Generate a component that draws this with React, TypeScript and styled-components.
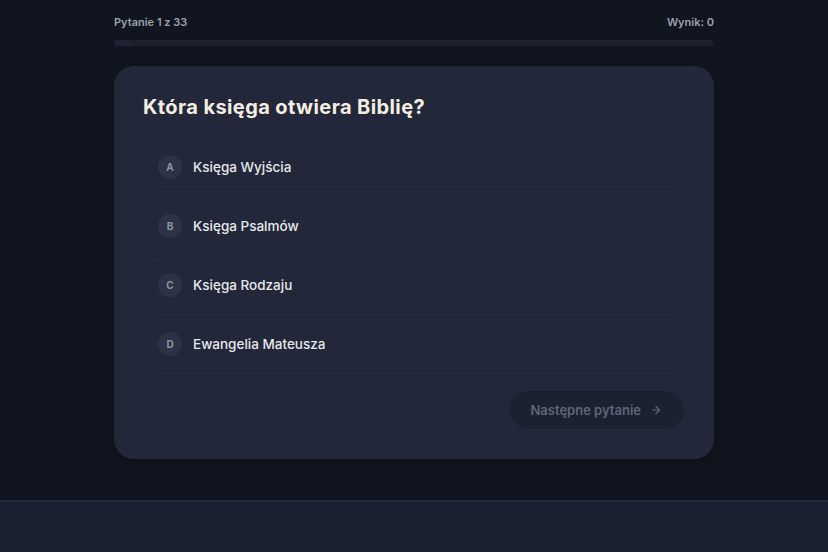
import React from 'react';
import styled, { createGlobalStyle } from 'styled-components';

const GlobalStyle = createGlobalStyle`
  html, body {
    margin: 0;
    padding: 0;
    background: #11151f;
  }
  body {
    font-family: 'Inter', 'Noto Sans', sans-serif;
  }
  * {
    box-sizing: border-box;
  }
`;

const Page = styled.div`
  display: flex;
  flex-direction: column;
  min-height: 100vh;
  background: #11151f;
`;

const Main = styled.main`
  flex: 1;
  display: flex;
  flex-direction: column;
  align-items: center;
  padding-top: 15px;
`;

const Quiz = styled.div`
  width: 600px;
  display: flex;
  flex-direction: column;
`;

const StatusRow = styled.div`
  display: flex;
  justify-content: space-between;
  align-items: center;
  font-size: 11px;
  font-weight: 600;
  color: #9ba1ad;
  line-height: 14px;
`;

const Progress = styled.div`
  height: 6px;
  margin-top: 11px;
  border-radius: 999px;
  background: #1b202c;
  overflow: hidden;
`;

const ProgressFill = styled.div`
  height: 100%;
  background: #1e2431;
  border-radius: 999px;
`;

const Card = styled.section`
  margin-top: 20px;
  background: #222839;
  border-radius: 20px;
  padding: 26px 30px 30px 29px;
  box-shadow: 0 4px 14px rgba(0, 0, 0, 0.25);
`;

const Question = styled.h2`
  margin: 0 0 20px;
  font-size: 20px;
  font-weight: 700;
  color: #f4eee2;
  line-height: 30px;
  letter-spacing: 0.4px;
`;

const Options = styled.div`
  display: flex;
  flex-direction: column;
  gap: 9px;
`;

const Option = styled.button`
  display: flex;
  align-items: center;
  gap: 11px;
  height: 50px;
  padding: 0 14px;
  border: 1px solid #262c3d;
  border-radius: 12px;
  background: #222839;
  color: #e6e7ea;
  font-family: inherit;
  font-size: 13.5px;
  font-weight: 500;
  text-align: left;
  cursor: pointer;
`;

const Letter = styled.span`
  width: 24px;
  height: 24px;
  border-radius: 50%;
  background: #2d3344;
  color: #8e95a3;
  font-size: 10px;
  font-weight: 700;
  display: flex;
  align-items: center;
  justify-content: center;
  flex-shrink: 0;
`;

const Actions = styled.div`
  display: flex;
  justify-content: flex-end;
  margin-top: 22px;
`;

const NextButton = styled.button`
  display: flex;
  align-items: center;
  gap: 9px;
  height: 38px;
  padding: 0 22px 0 20px;
  border: none;
  border-radius: 999px;
  background: #1c2130;
  color: #5f6676;
  font-family: inherit;
  font-size: 13px;
  font-weight: 600;
  cursor: not-allowed;
`;

const Footer = styled.footer`
  height: 52px;
  background: #1b2030;
  border-top: 2px solid #232939;
`;

const options = ['Księga Wyjścia', 'Księga Psalmów', 'Księga Rodzaju', 'Ewangelia Mateusza'];
const letters = ['A', 'B', 'C', 'D'];

const ArrowRight: React.FC = () => (
  <svg width="12" height="12" viewBox="0 0 24 24" fill="none" stroke="currentColor" strokeWidth="2.4" strokeLinecap="round" strokeLinejoin="round">
    <path d="M5 12h14" />
    <path d="m12 5 7 7-7 7" />
  </svg>
);

const App: React.FC = () => {
  const current = 1;
  const total = 33;

  return (
    <Page>
      <GlobalStyle />
      <Main>
        <Quiz>
          <StatusRow>
            <span>Pytanie {current} z {total}</span>
            <span>Wynik: 0</span>
          </StatusRow>
          <Progress>
            <ProgressFill style={{ width: `${(current / total) * 100}%` }} />
          </Progress>

          <Card>
            <Question>Która księga otwiera Biblię?</Question>
            <Options>
              {options.map((text, i) => (
                <Option key={text}>
                  <Letter>{letters[i]}</Letter>
                  {text}
                </Option>
              ))}
            </Options>
            <Actions>
              <NextButton disabled>
                Następne pytanie
                <ArrowRight />
              </NextButton>
            </Actions>
          </Card>
        </Quiz>
      </Main>
      <Footer />
    </Page>
  );
};

export default App;
